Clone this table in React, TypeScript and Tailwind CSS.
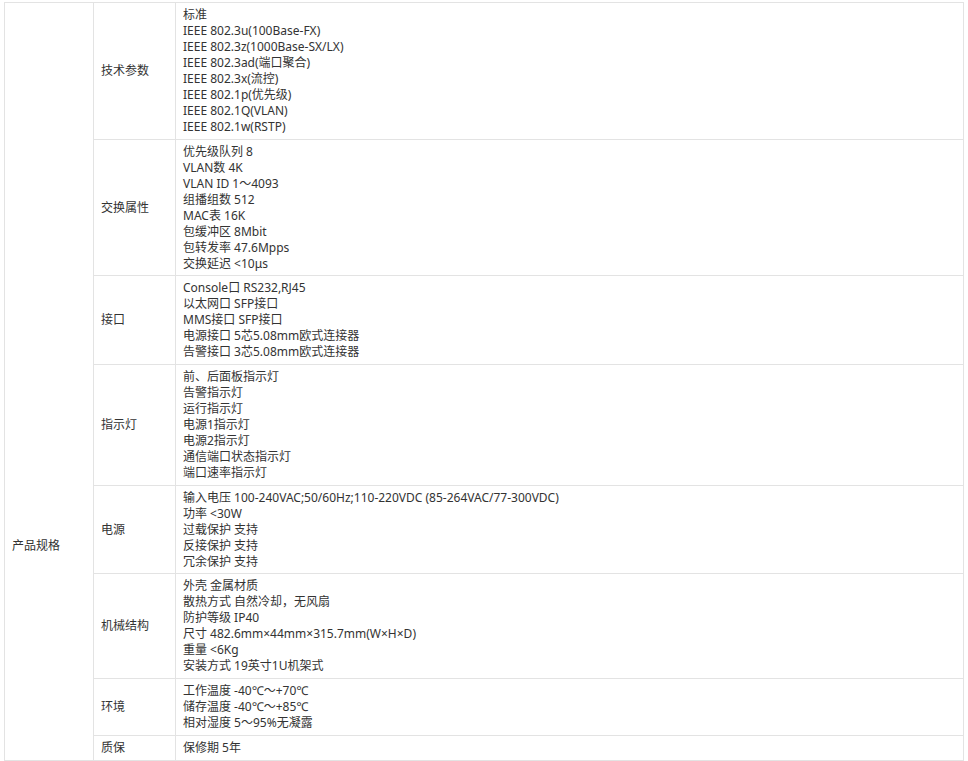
const rows: { label: string; lines: string[] }[] = [
  {
    label: "技术参数",
    lines: [
      "标准",
      "IEEE 802.3u(100Base-FX)",
      "IEEE 802.3z(1000Base-SX/LX)",
      "IEEE 802.3ad(端口聚合)",
      "IEEE 802.3x(流控)",
      "IEEE 802.1p(优先级)",
      "IEEE 802.1Q(VLAN)",
      "IEEE 802.1w(RSTP)",
    ],
  },
  {
    label: "交换属性",
    lines: [
      "优先级队列 8",
      "VLAN数 4K",
      "VLAN ID 1～4093",
      "组播组数 512",
      "MAC表 16K",
      "包缓冲区 8Mbit",
      "包转发率 47.6Mpps",
      "交换延迟 <10μs",
    ],
  },
  {
    label: "接口",
    lines: [
      "Console口 RS232,RJ45",
      "以太网口 SFP接口",
      "MMS接口 SFP接口",
      "电源接口 5芯5.08mm欧式连接器",
      "告警接口 3芯5.08mm欧式连接器",
    ],
  },
  {
    label: "指示灯",
    lines: [
      "前、后面板指示灯",
      "告警指示灯",
      "运行指示灯",
      "电源1指示灯",
      "电源2指示灯",
      "通信端口状态指示灯",
      "端口速率指示灯",
    ],
  },
  {
    label: "电源",
    lines: [
      "输入电压 100-240VAC;50/60Hz;110-220VDC (85-264VAC/77-300VDC)",
      "功率 <30W",
      "过载保护 支持",
      "反接保护 支持",
      "冗余保护 支持",
    ],
  },
  {
    label: "机械结构",
    lines: [
      "外壳 金属材质",
      "散热方式 自然冷却，无风扇",
      "防护等级 IP40",
      "尺寸 482.6mm×44mm×315.7mm(W×H×D)",
      "重量 <6Kg",
      "安装方式 19英寸1U机架式",
    ],
  },
  {
    label: "环境",
    lines: [
      "工作温度 -40℃～+70℃",
      "储存温度 -40℃～+85℃",
      "相对湿度 5～95%无凝露",
    ],
  },
  {
    label: "质保",
    lines: ["保修期 5年"],
  },
];

export default function App() {
  const last = rows.length - 1;
  return (
    <div className="min-h-screen bg-white pt-[2px] pl-[4px] text-[12px] leading-[16px] text-[#333] [font-family:'Noto_Sans','Noto_Sans_CJK_SC',sans-serif]">
      <table className="w-[960px] border-collapse">
        <colgroup>
          <col className="w-[89px]" />
          <col className="w-[82px]" />
          <col />
        </colgroup>
        <tbody>
          {rows.map((row, i) => (
            <tr key={i}>
              {i === 0 && (
                <td
                  rowSpan={rows.length}
                  className="border border-[#e3e3e3] px-[7px] pt-[535px] pb-[40px] align-top"
                >
                  产品规格
                </td>
              )}
              <td
                className={
                  i === last
                    ? "border border-[#e3e3e3] px-[7px] pt-[4px] pb-[3.7px] align-top"
                    : "border border-[#e3e3e3] px-[7px] pt-[4px] pb-[3.7px] align-middle"
                }
              >
                {row.label}
              </td>
              <td
                className={
                  i === last
                    ? "border border-[#e3e3e3] px-[7px] pt-[4px] pb-[3.7px] align-top"
                    : "border border-[#e3e3e3] px-[7px] pt-[4px] pb-[3.7px] align-middle"
                }
              >
                {row.lines.map((line, j) => (
                  <div key={j}>{line}</div>
                ))}
              </td>
            </tr>
          ))}
        </tbody>
      </table>
    </div>
  );
}
